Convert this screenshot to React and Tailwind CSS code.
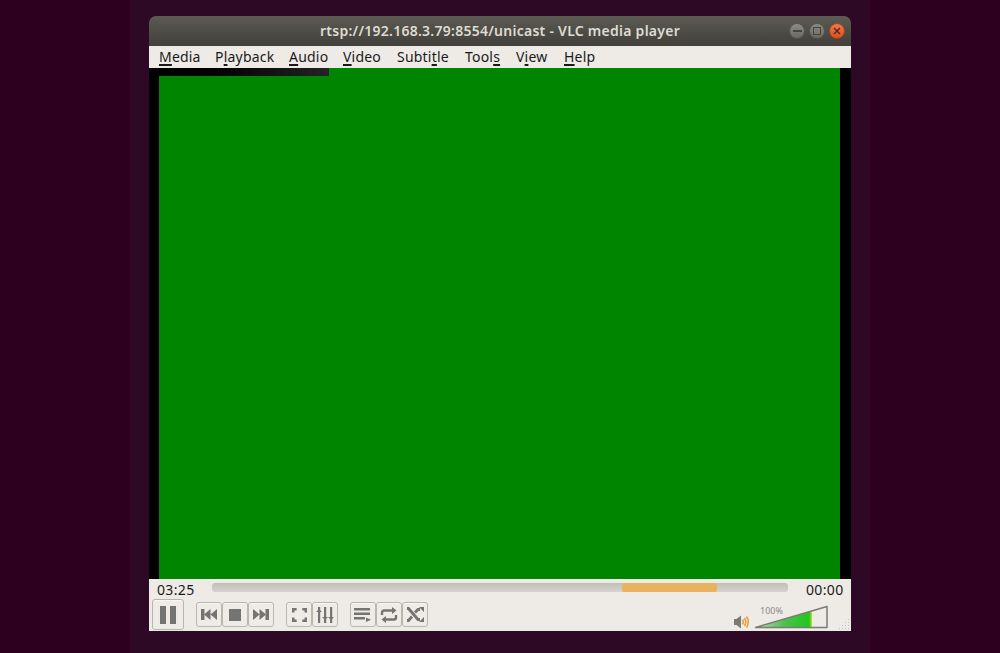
import React from "react";

function Btn({ children, className = "w-[26px] h-[25px]" }) {
  return (
    <div className={`${className} flex items-center justify-center rounded-[3px] border border-[#b9b6b0] bg-[#efece7] shadow-[inset_0_1px_0_#f8f6f3]`}>
      {children}
    </div>
  );
}

const G = "#747472";

function MenuItem({ pre, u, post, className }) {
  return (
    <span className={className}>
      {pre}
      <u className="underline underline-offset-[2px] decoration-[1.5px]">{u}</u>
      {post}
    </span>
  );
}

export default function App() {
  return (
    <div className="w-full h-[653px] bg-[#2c001e] flex justify-center overflow-hidden font-['Noto_Sans','Open_Sans',sans-serif]">
      <div className="w-[740px] h-[653px] bg-[#2e0926] flex justify-center pt-4">
        <div className="w-[702px] h-[615px] flex flex-col">
          {/* Title bar */}
          <div className="h-[30px] rounded-t-[7px] bg-gradient-to-b from-[#5c5b53] to-[#403f3a] flex items-center relative">
            <div className="flex-1 text-center text-[14px] font-semibold tracking-[0.26px] text-[#dfdbd2] leading-none pb-[1px]">
              rtsp://192.168.3.79:8554/unicast - VLC media player
            </div>
            <div className="absolute right-[6px] top-[7px] flex gap-[4px]">
              <div className="w-[16px] h-[16px] rounded-full bg-gradient-to-b from-[#8c8b84] to-[#6a6963] border border-[#55544e] flex items-center justify-center">
                <div className="w-[9px] h-[1.5px] bg-[#45443f]" />
              </div>
              <div className="w-[16px] h-[16px] rounded-full bg-gradient-to-b from-[#8c8b84] to-[#6a6963] border border-[#55544e] flex items-center justify-center">
                <div className="w-[8px] h-[8px] border border-[#45443f]" />
              </div>
              <div className="w-[16px] h-[16px] rounded-full bg-gradient-to-b from-[#f0784a] to-[#dd4f1f] border border-[#a8451f] flex items-center justify-center">
                <svg width="8" height="8" viewBox="0 0 8 8"><path d="M1 1l6 6M7 1l-6 6" stroke="#4a2a1c" strokeWidth="1.4" /></svg>
              </div>
            </div>
          </div>
          {/* Menu bar */}
          <div className="h-[22px] bg-[#eeebe6] flex items-center text-[14px] tracking-[0.2px] text-[#1a1a1a] leading-none pl-[10px]">
            <MenuItem className="w-[56px]" pre="" u="M" post="edia" />
            <MenuItem className="w-[74px]" pre="P" u="l" post="ayback" />
            <MenuItem className="w-[54px]" pre="" u="A" post="udio" />
            <MenuItem className="w-[54px]" pre="" u="V" post="ideo" />
            <MenuItem className="w-[68px]" pre="Subti" u="t" post="le" />
            <MenuItem className="w-[51px]" pre="Tool" u="s" post="" />
            <MenuItem className="w-[48px]" pre="V" u="i" post="ew" />
            <MenuItem className="" pre="" u="H" post="elp" />
          </div>
          {/* Video */}
          <div className="h-[511px] bg-black flex pl-[10px] pr-[11px]">
            <div className="flex-1 bg-[#008500] relative">
              <div className="absolute left-0 top-0 w-[170px] h-[8px] bg-gradient-to-r from-[#000000] via-[#0a0a0a] to-[#242424]" />
            </div>
          </div>
          {/* Controls */}
          <div className="h-[52px] bg-[#eeebe6] flex flex-col relative">
            <div className="h-[21px] flex items-center text-[14px] tracking-[0.35px] text-[#1a1a1a] leading-none">
              <span className="w-[63px] pl-[8px]">03:25</span>
              <div className="w-[576px] h-[9px] rounded-[3px] bg-gradient-to-b from-[#c2bfba] to-[#d6d3ce] flex mt-[-4px]">
                <div className="w-[410px]" />
                <div className="w-[95px] h-[9px] rounded-[2px] bg-[#e8b25f]" />
              </div>
              <span className="ml-[18px]">00:00</span>
            </div>
            <div className="flex items-center pl-[3px] h-[31px] mt-[-1px]">
              <Btn className="w-[32px] h-[31px] mr-[12px]">
                <svg width="16" height="18" viewBox="0 0 16 18"><rect x="0" y="0" width="6" height="18" fill={G} /><rect x="10" y="0" width="6" height="18" fill={G} /></svg>
              </Btn>
              <Btn>
                <svg width="16" height="11" viewBox="0 0 16 11"><rect x="0" y="0" width="3.500" height="11" fill={G} /><path d="M9.500 0v11L3 5.500zM16 0v11L9.500 5.500z" fill={G} /></svg>
              </Btn>
              <Btn>
                <svg width="12" height="12" viewBox="0 0 12 12"><rect width="12" height="12" fill={G} /></svg>
              </Btn>
              <Btn className="w-[26px] h-[25px] mr-[12px]">
                <svg width="16" height="11" viewBox="0 0 16 11"><rect x="12.500" y="0" width="3.500" height="11" fill={G} /><path d="M0 0v11l6.500-5.500zM6.500 0v11l6.500-5.500z" fill={G} /></svg>
              </Btn>
              <Btn>
                <svg width="15" height="14" viewBox="0 0 15 14" fill="none" stroke={G} strokeWidth="2.500"><path d="M1.200 4.500V1.200h3.500M10.300 1.200h3.500v3.300M13.800 9.500v3.300h-3.500M4.700 12.800H1.200V9.500" /></svg>
              </Btn>
              <Btn className="w-[26px] h-[25px] mr-[12px]">
                <svg width="18" height="16" viewBox="0 0 18 16" fill={G}><rect x="2" y="0" width="2.200" height="16" /><rect x="8" y="0" width="2.200" height="16" /><rect x="14" y="0" width="2.200" height="16" /><path d="M0 5l3-3 3 3zM6 10l3 3 3-3zM12 10l3 3 3-3z" /></svg>
              </Btn>
              <Btn>
                <svg width="18" height="14" viewBox="0 0 18 14" fill={G}><rect y="0" width="16" height="2.500" /><rect y="4.500" width="16" height="2.500" /><rect y="9" width="11" height="2.500" /><path d="M12 9.500v4.500l5-2.250z" /><rect y="12" width="0" height="0" /></svg>
              </Btn>
              <Btn>
                <svg width="18" height="16" viewBox="0 0 18 16" fill="none" stroke={G} strokeWidth="2.400"><path d="M2 8V5.500A2 2 0 0 1 4 3.500H13" /><path d="M16 8v2.500a2 2 0 0 1-2 2H5" /><path d="M12 0l4.500 3.500-4.500 3.500zM6 9l-4.500 3.500 4.500 3.500z" fill={G} stroke="none" /></svg>
              </Btn>
              <Btn>
                <svg width="17" height="15" viewBox="0 0 17 15" fill="none" stroke={G} strokeWidth="2.800"><path d="M0 1.500l1.500 0L11 12.500h2M0 13.500h1.500l3.500-4M8 5.500L11 2.500h2" /><path d="M12 0l5 0v5zM12 15l5 0v-5z" fill={G} stroke="none" /></svg>
              </Btn>
            </div>
            {/* Volume: sits over the control bar's right corner */}
            <svg className="absolute left-[585px] top-[36px]" width="15" height="14" viewBox="0 0 15 14">
              <path d="M0 4h2.500L7 0.500v13L2.500 10H0z" fill="#7a7a78" />
              <path d="M8.500 4.500q1.500 2.500 0 5M10.500 3q2.500 4 0 8M12.500 1.500q3.500 5.500 0 11" fill="none" stroke="#e89a3c" strokeWidth="1.500" />
            </svg>
            <svg className="absolute left-[605px] top-[26px]" width="75" height="24" viewBox="0 0 75 24">
              <defs>
                <linearGradient id="vol" x1="0" x2="1" y1="0" y2="0">
                  <stop offset="0" stopColor="#c2d8bc" />
                  <stop offset="0.500" stopColor="#4cc24c" />
                  <stop offset="0.950" stopColor="#1fc81f" />
                  <stop offset="1" stopColor="#d0e020" />
                </linearGradient>
              </defs>
              <path d="M2 22.500L58 6v16.500z" fill="url(#vol)" />
              <path d="M1.500 22.500L73 1.500v21z" fill="none" stroke="#7a7a76" strokeWidth="1.500" strokeLinejoin="round" />
            </svg>
            <span className="absolute left-[611px] top-[27px] text-[9px] text-[#8a8a86] leading-none">100%</span>
            <svg className="absolute right-0 bottom-0" width="13" height="13" viewBox="0 0 13 13" fill="#c4c1bb">
              <rect x="10" y="10" width="1" height="1" /><rect x="7" y="10" width="1" height="1" /><rect x="4" y="10" width="1" height="1" /><rect x="1" y="10" width="1" height="1" />
              <rect x="10" y="7" width="1" height="1" /><rect x="7" y="7" width="1" height="1" /><rect x="4" y="7" width="1" height="1" />
              <rect x="10" y="4" width="1" height="1" /><rect x="7" y="4" width="1" height="1" /><rect x="10" y="1" width="1" height="1" />
            </svg>
          </div>
        </div>
      </div>
    </div>
  );
}
